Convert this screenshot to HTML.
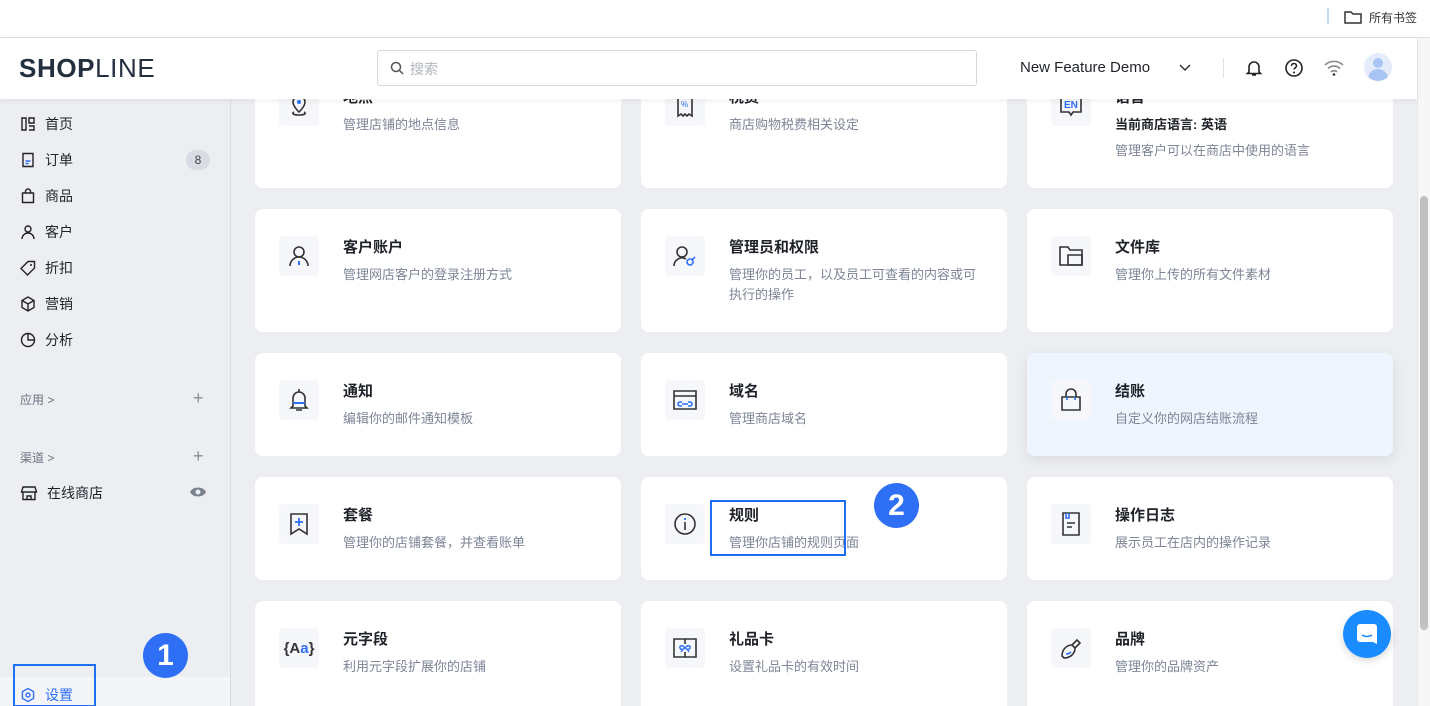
<!DOCTYPE html>
<html><head><meta charset="utf-8"><style>
*{box-sizing:border-box;margin:0;padding:0}
html,body{width:1430px;height:706px;overflow:hidden}
body{background:#eceef2;font-family:"Liberation Sans","Noto Sans CJK SC",sans-serif;position:relative;color:#1f2329}
.top{position:absolute;left:0;top:0;width:1430px;height:38px;background:#fff;border-bottom:1px solid #dfe1e5}
.hdr{position:absolute;left:0;top:38px;width:1417px;height:61px;background:#fff;box-shadow:0 2px 6px rgba(0,0,0,.06);z-index:5}
.side{position:absolute;left:0;top:99px;width:231px;height:607px;background:#eceef2;border-right:1px solid #d9dce3}
.nav{position:absolute;left:20px;font-size:14px;color:#1f2329;display:flex;align-items:center}
.nav svg{margin-right:9px}
.card{position:absolute;background:#fff;border-radius:8px;width:366px}
.ib{position:absolute;left:24px;width:40px;height:40px;background:#f5f7fa;border-radius:4px;display:flex;align-items:center;justify-content:center}
.t{position:absolute;left:88px;font-size:15px;font-weight:bold;color:#1f2329;line-height:20px}
.d{position:absolute;left:88px;font-size:13px;color:#7d8596;line-height:20px;width:255px}
.badge{position:absolute;border-radius:50%;background:#2f6ff6;color:#fff;font-weight:bold;display:flex;align-items:center;justify-content:center}
</style></head><body>
<div class="top">
 <div style="position:absolute;left:1327px;top:8px;width:2px;height:16px;background:#c6d8f5"></div>
 <svg style="position:absolute;left:1344px;top:10px" width="18" height="14" viewBox="0 0 18 14"><path d="M1 2h6l2 2h8v9H1z" fill="none" stroke="#333" stroke-width="1.5"/></svg>
 <div style="position:absolute;left:1369px;top:9px;font-size:12px;color:#333">所有书签</div>
</div>
<div class="hdr">
 <div style="position:absolute;left:19px;top:15px;font-size:26px;color:#243040;letter-spacing:0.6px"><b>SHOP</b><span style="font-weight:normal">LINE</span></div>
 <div style="position:absolute;left:377px;top:12px;width:600px;height:36px;border:1px solid #d4d8e0;border-radius:3px">
  <svg style="position:absolute;left:12px;top:10px" width="14" height="14" viewBox="0 0 14 14"><circle cx="6" cy="6" r="4.5" fill="none" stroke="#555" stroke-width="1.5"/><path d="M9.5 9.5L13 13" stroke="#555" stroke-width="1.5"/></svg>
  <span style="position:absolute;left:32px;top:8px;font-size:14px;color:#b0b5bf">搜索</span>
 </div>
 <div style="position:absolute;left:1020px;top:21px;font-size:15px;color:#1f2329">New Feature Demo</div>
 <svg style="position:absolute;left:1179px;top:26px" width="12" height="8" viewBox="0 0 12 8"><path d="M1 1l5 5 5-5" fill="none" stroke="#333" stroke-width="1.5"/></svg>
 <div style="position:absolute;left:1223px;top:20px;width:1px;height:20px;background:#dde0e6"></div>
 <svg style="position:absolute;left:1244px;top:20px" width="20" height="20" viewBox="0 0 20 20"><path d="M5 14V9a5 5 0 0110 0v5l1.5 1.5h-13z M8 17h4" fill="none" stroke="#222" stroke-width="1.6"/></svg>
 <svg style="position:absolute;left:1284px;top:20px" width="20" height="20" viewBox="0 0 20 20"><circle cx="10" cy="10" r="8" fill="none" stroke="#222" stroke-width="1.6"/><path d="M7.5 8a2.5 2.5 0 115 0c0 1.5-2.5 2-2.5 3.5" fill="none" stroke="#222" stroke-width="1.6"/><circle cx="10" cy="14.5" r="1" fill="#222"/></svg>
 <svg style="position:absolute;left:1323px;top:21px" width="22" height="18" viewBox="0 0 22 18"><path d="M2 6a13 13 0 0118 0M5 9.5a8.5 8.5 0 0112 0M8 13a4 4 0 016 0" fill="none" stroke="#888" stroke-width="1.6"/><circle cx="11" cy="15.5" r="1.3" fill="#333"/></svg>
 <div style="position:absolute;left:1364px;top:15px;width:28px;height:28px;border-radius:50%;background:#e4ecfb;overflow:hidden"><div style="position:absolute;left:9px;top:5px;width:10px;height:10px;border-radius:50%;background:#a8c4f5"></div><div style="position:absolute;left:4px;top:16px;width:20px;height:14px;border-radius:10px 10px 0 0;background:#a8c4f5"></div></div>
</div>
<div class="side">
 <div class="nav" style="top:15px"><svg width="16" height="16" viewBox="0 0 16 16"><path d="M2 2h4v12H2zM9 2h5v5H9zM9 10h5v4H9" fill="none" stroke="#222" stroke-width="1.4"/></svg>首页</div>
 <div class="nav" style="top:51px"><svg width="16" height="16" viewBox="0 0 16 16"><path d="M3 1.5h10v13H3z" fill="none" stroke="#222" stroke-width="1.4"/><path d="M5.5 9h5M5.5 11.5h3" stroke="#2f6ff6" stroke-width="1.4"/></svg>订单</div>
 <div style="position:absolute;left:186px;top:51px;width:24px;height:20px;border-radius:10px;background:#d8dce5;font-size:12px;color:#444;text-align:center;line-height:20px">8</div>
 <div class="nav" style="top:87px"><svg width="16" height="16" viewBox="0 0 16 16"><path d="M2.5 5h11v9.5h-11zM5.5 5V3.5a2.5 2.5 0 015 0V5" fill="none" stroke="#222" stroke-width="1.4"/></svg>商品</div>
 <div class="nav" style="top:123px"><svg width="16" height="16" viewBox="0 0 16 16"><circle cx="8" cy="5" r="3" fill="none" stroke="#222" stroke-width="1.4"/><path d="M2 15a6 6 0 0112 0" fill="none" stroke="#222" stroke-width="1.4"/></svg>客户</div>
 <div class="nav" style="top:159px"><svg width="16" height="16" viewBox="0 0 16 16"><path d="M8 1.5h6.5V8l-7 7-6.5-6.5z" fill="none" stroke="#222" stroke-width="1.4"/><circle cx="11" cy="5" r="1" fill="#222"/></svg>折扣</div>
 <div class="nav" style="top:195px"><svg width="16" height="16" viewBox="0 0 16 16"><path d="M8 1l6 3.5v7L8 15l-6-3.5v-7zM2 4.5L8 8l6-3.5M8 8v7" fill="none" stroke="#222" stroke-width="1.4"/></svg>营销</div>
 <div class="nav" style="top:231px"><svg width="16" height="16" viewBox="0 0 16 16"><circle cx="8" cy="8" r="6.5" fill="none" stroke="#222" stroke-width="1.4"/><path d="M8 1.5V8h6.5" fill="none" stroke="#222" stroke-width="1.4"/></svg>分析</div>
 <div style="position:absolute;left:20px;top:292px;font-size:12px;color:#6b7280">应用 &gt;</div>
 <div style="position:absolute;left:193px;top:289px;font-size:18px;color:#8a8f99">+</div>
 <div style="position:absolute;left:20px;top:350px;font-size:12px;color:#6b7280">渠道 &gt;</div>
 <div style="position:absolute;left:193px;top:347px;font-size:18px;color:#8a8f99">+</div>
 <div class="nav" style="top:384px"><svg width="18" height="16" viewBox="0 0 18 16"><path d="M3 2h12l1.5 5h-15zM3 7v7.5h12V7M7 14.5V11h4v3.5" fill="none" stroke="#222" stroke-width="1.4"/></svg>在线商店</div>
 <svg style="position:absolute;left:189px;top:387px" width="18" height="12" viewBox="0 0 18 12"><path d="M1 6c3-6 13-6 16 0-3 6-13 6-16 0z" fill="#7a808c"/><circle cx="9" cy="6" r="2.5" fill="#eceef2"/></svg>
 <div style="position:absolute;left:0;top:578px;width:230px;height:29px;background:#f4f5f8"></div>
 <div class="nav" style="top:586px;color:#2f6ff6"><svg width="16" height="16" viewBox="0 0 16 16"><path d="M8 1.5l5.6 3.2v6.6L8 14.5l-5.6-3.2V4.7z" fill="none" stroke="#2f6ff6" stroke-width="1.4"/><circle cx="8" cy="8" r="2" fill="none" stroke="#2f6ff6" stroke-width="1.4"/></svg>设置</div>
 <div style="position:absolute;left:13px;top:565px;width:83px;height:43px;border:2px solid #1f6ff5"></div>
</div>
<div class="badge" style="left:143px;top:633px;width:45px;height:45px;font-size:30px">1</div>

<div class="card" style="left:255px;top:59px;height:129px"><div class="ib" style="top:27px"><svg width="22" height="26" viewBox="0 0 22 26"><path d="M11 19s-6-5.5-6-10a6 6 0 0112 0c0 4.5-6 10-6 10z" fill="none" stroke="#333" stroke-width="1.6"/><circle cx="11" cy="9" r="2" fill="#2f6ff6"/><path d="M6 19c-2 1-2 3 5 3s7-2 5-3" fill="none" stroke="#333" stroke-width="1.6"/></svg></div><div class="t" style="top:29px">地点</div><div class="d" style="top:56px">管理店铺的地点信息</div></div>
<div class="card" style="left:641px;top:59px;height:129px"><div class="ib" style="top:27px"><svg width="22" height="24" viewBox="0 0 22 24"><path d="M4 2h14v20l-3-2-2 2-2-2-2 2-2-2-3 2z" fill="none" stroke="#333" stroke-width="1.6"/><text x="7" y="13" font-size="8" fill="#2f6ff6" font-family="Liberation Sans">%</text></svg></div><div class="t" style="top:29px">税费</div><div class="d" style="top:56px">商店购物税费相关设定</div></div>
<div class="card" style="left:1027px;top:59px;height:129px"><div class="ib" style="top:27px"><svg width="26" height="26" viewBox="0 0 26 26"><path d="M3 3v16h8l2 3 2-3h8V3" fill="none" stroke="#333" stroke-width="1.6"/><text x="6" y="15" font-size="10" font-weight="bold" fill="#2f6ff6" font-family="Liberation Sans">EN</text></svg></div><div class="t" style="top:29px">语言</div><div class="d" style="top:56px;color:#1f2329;font-weight:bold;font-size:13px">当前商店语言: 英语</div><div class="d" style="top:82px">管理客户可以在商店中使用的语言</div></div>

<div class="card" style="left:255px;top:209px;height:123px"><div class="ib" style="top:27px"><svg width="24" height="24" viewBox="0 0 24 24"><circle cx="12" cy="8" r="5" fill="none" stroke="#333" stroke-width="1.6"/><path d="M3 22a9 9 0 0118 0" fill="none" stroke="#333" stroke-width="1.6"/><path d="M12 17v4" stroke="#2f6ff6" stroke-width="2"/></svg></div><div class="t" style="top:29px">客户账户</div><div class="d" style="top:56px">管理网店客户的登录注册方式</div></div>
<div class="card" style="left:641px;top:209px;height:123px"><div class="ib" style="top:27px"><svg width="26" height="24" viewBox="0 0 26 24"><circle cx="10" cy="8" r="5" fill="none" stroke="#333" stroke-width="1.6"/><path d="M2 22a8 8 0 0112-7" fill="none" stroke="#333" stroke-width="1.6"/><circle cx="18" cy="18" r="3" fill="none" stroke="#2f6ff6" stroke-width="1.6"/><path d="M20 16l3-3" stroke="#2f6ff6" stroke-width="1.6"/></svg></div><div class="t" style="top:29px">管理员和权限</div><div class="d" style="top:56px;width:254px">管理你的员工，以及员工可查看的内容或可执行的操作</div></div>
<div class="card" style="left:1027px;top:209px;height:123px"><div class="ib" style="top:27px"><svg width="26" height="22" viewBox="0 0 26 22"><path d="M2 2h8l2 3h12v15H2z" fill="none" stroke="#333" stroke-width="1.6"/><path d="M10 10h14v10H10z" fill="none" stroke="#333" stroke-width="1.6"/></svg></div><div class="t" style="top:29px">文件库</div><div class="d" style="top:56px">管理你上传的所有文件素材</div></div>

<div class="card" style="left:255px;top:353px;height:103px"><div class="ib" style="top:27px"><svg width="22" height="26" viewBox="0 0 22 26"><path d="M5 19V11a6 6 0 0112 0v8l2 2H3z" fill="none" stroke="#333" stroke-width="1.6"/><path d="M11 2v3M8 23h6" stroke="#333" stroke-width="1.6"/><path d="M5 16h12" stroke="#2f6ff6" stroke-width="2"/></svg></div><div class="t" style="top:29px">通知</div><div class="d" style="top:56px">编辑你的邮件通知模板</div></div>
<div class="card" style="left:641px;top:353px;height:103px"><div class="ib" style="top:27px"><svg width="26" height="24" viewBox="0 0 26 24"><path d="M2 3h22v18H2zM2 8h22" fill="none" stroke="#333" stroke-width="1.6"/><path d="M10 14h-2a2 2 0 000 4h2M16 14h2a2 2 0 010 4h-2M10 16h6" fill="none" stroke="#2f6ff6" stroke-width="1.6"/></svg></div><div class="t" style="top:29px">域名</div><div class="d" style="top:56px">管理商店域名</div></div>
<div class="card" style="left:1027px;top:353px;height:103px;background:#eef5fe;box-shadow:0 4px 14px rgba(0,0,0,.08)"><div class="ib" style="top:27px"><svg width="24" height="24" viewBox="0 0 24 24"><path d="M3 9h18v13H3zM7 9V6a5 5 0 0110 0v3" fill="none" stroke="#333" stroke-width="1.6"/><path d="M8 9v3M16 9v3" stroke="#2f6ff6" stroke-width="1.6"/></svg></div><div class="t" style="top:29px">结账</div><div class="d" style="top:56px">自定义你的网店结账流程</div></div>

<div class="card" style="left:255px;top:477px;height:103px"><div class="ib" style="top:27px"><svg width="22" height="26" viewBox="0 0 22 26"><path d="M3 3h16v20l-8-5-8 5z" fill="none" stroke="#333" stroke-width="1.6"/><path d="M11 7v8M7 11h8" stroke="#2f6ff6" stroke-width="1.8"/></svg></div><div class="t" style="top:29px">套餐</div><div class="d" style="top:56px">管理你的店铺套餐，并查看账单</div></div>
<div class="card" style="left:641px;top:477px;height:103px"><div class="ib" style="top:27px"><svg width="24" height="24" viewBox="0 0 24 24"><circle cx="12" cy="12" r="10" fill="none" stroke="#333" stroke-width="1.6"/><path d="M12 10v8" stroke="#333" stroke-width="1.6"/><circle cx="12" cy="7" r="1.1" fill="#2f6ff6"/></svg></div><div class="t" style="top:29px">规则</div><div class="d" style="top:56px">管理你店铺的规则页面</div></div>
<div style="position:absolute;left:710px;top:500px;width:136px;height:56px;border:2px solid #1f6ff5;z-index:3"></div>
<div class="badge" style="left:874px;top:483px;width:45px;height:45px;font-size:30px">2</div>
<div class="card" style="left:1027px;top:477px;height:103px"><div class="ib" style="top:27px"><svg width="22" height="26" viewBox="0 0 22 26"><path d="M3 2h16v22H3z" fill="none" stroke="#333" stroke-width="1.6"/><path d="M6 2v5h3V2" fill="none" stroke="#2f6ff6" stroke-width="1.6"/><path d="M7 12h8M7 16h5" stroke="#333" stroke-width="1.6"/></svg></div><div class="t" style="top:29px">操作日志</div><div class="d" style="top:56px">展示员工在店内的操作记录</div></div>

<div class="card" style="left:255px;top:601px;height:120px"><div class="ib" style="top:27px"><span style="font-size:15px;font-weight:bold;color:#333">{A<span style="color:#2f6ff6">a</span>}</span></div><div class="t" style="top:29px">元字段</div><div class="d" style="top:56px">利用元字段扩展你的店铺</div></div>
<div class="card" style="left:641px;top:601px;height:120px"><div class="ib" style="top:27px"><svg width="26" height="22" viewBox="0 0 26 22"><path d="M2 2h22v18H2zM13 2v5M13 15v5" fill="none" stroke="#333" stroke-width="1.6"/><path d="M13 11c-2-3-6-3-5 0s5 0 5 0 4 3 5 0-3-3-5 0M11 12l-2 3M15 12l2 3" fill="none" stroke="#2f6ff6" stroke-width="1.4"/></svg></div><div class="t" style="top:29px">礼品卡</div><div class="d" style="top:56px">设置礼品卡的有效时间</div></div>
<div class="card" style="left:1027px;top:601px;height:120px"><div class="ib" style="top:27px"><svg width="26" height="24" viewBox="0 0 26 24"><path d="M4 20c0-6 4-11 10-11l3 3c0 6-5 10-11 10z" fill="none" stroke="#333" stroke-width="1.6"/><path d="M14 9l5-5 3 3-5 5" fill="none" stroke="#333" stroke-width="1.6"/><path d="M8 18c2 0 4-1 5-2" stroke="#2f6ff6" stroke-width="1.6" fill="none"/></svg></div><div class="t" style="top:29px">品牌</div><div class="d" style="top:56px">管理你的品牌资产</div></div>

<div style="position:absolute;left:1343px;top:610px;width:48px;height:48px;border-radius:50%;background:#1a8cff;box-shadow:0 3px 8px rgba(0,0,0,.15)"><svg style="position:absolute;left:13px;top:13px" width="22" height="22" viewBox="0 0 22 22"><path d="M4 1h14a3 3 0 013 3v17l-4-2H4a3 3 0 01-3-3V4a3 3 0 013-3z" fill="#fff"/><path d="M6 12c3 2 7 2 10 0" stroke="#1a8cff" stroke-width="1.6" fill="none"/></svg></div>

<div style="position:absolute;left:1417px;top:38px;width:13px;height:668px;background:#f7f7f7;border-left:1px solid #e8e8e8"></div>
<div style="position:absolute;left:1420px;top:196px;width:8px;height:434px;border-radius:4px;background:#c1c1c1"></div>
</body></html>
